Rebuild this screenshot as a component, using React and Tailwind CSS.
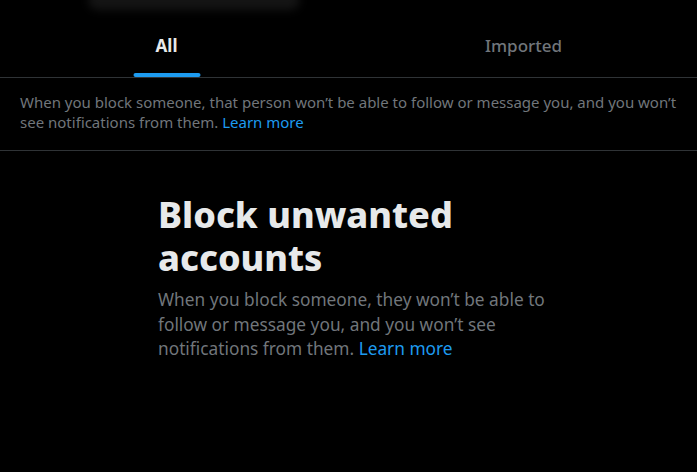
export default function App() {
  return (
    <div className="relative w-[697px] h-[472px] bg-black overflow-hidden" style={{ fontFamily: '"Noto Sans", "Open Sans", sans-serif' }}>
      <div className="absolute left-[88px] top-[-10px] w-[212px] h-[20px] rounded-full bg-[#141414] blur-[4px]"></div>
      <div className="flex h-[78px] border-b border-[#2f3336]">
        <div className="w-[333px] flex justify-center">
          <div className="relative flex items-center h-full pt-[14px]">
            <span className="text-[17px] leading-[20px] font-bold text-[#e7e9ea]">All</span>
            <div className="absolute bottom-0 left-1/2 -translate-x-1/2 w-[67px] h-[4px] rounded-full bg-[#1d9bf0]"></div>
          </div>
        </div>
        <div className="flex-1 flex justify-center items-center pt-[14px] pl-[17px]">
          <span className="text-[17px] leading-[20px] font-medium text-[#71767b]">Imported</span>
        </div>
      </div>
      <div className="px-5 pt-[14px] pb-[18px] border-b border-[#2f3336] text-[15px] leading-[20px] text-[#71767b]">
        When you block someone, that person won’t be able to follow or message you, and you won’t see notifications from them. <span className="text-[#1d9bf0]">Learn more</span>
      </div>
      <div className="ml-[158px] w-[400px] mt-[42px]">
        <div className="text-[36px] leading-[43px] font-extrabold text-[#e7e9ea]">Block unwanted accounts</div>
        <div className="mt-[9px] text-[17.3px] leading-[24.5px] text-[#71767b]">
          When you block someone, they won’t be able to follow or message you, and you won’t see notifications from them. <span className="text-[#1d9bf0]">Learn more</span>
        </div>
      </div>
    </div>
  );
}
